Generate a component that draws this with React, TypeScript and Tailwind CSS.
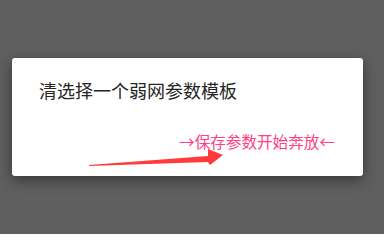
export default function App() {
  return (
    <div className="w-[384px] h-[234px] bg-[#5f5f5f] pt-[58px] pl-[12px] overflow-hidden" style={{ fontFamily: '"Noto Sans CJK SC", "Noto Sans", sans-serif' }}>
      <div className="relative w-[351px] h-[118px] bg-white rounded-[3px] shadow-[0_4px_14px_rgba(0,0,0,0.45)]">
        <div className="pl-[27px] pt-[20px] text-[18px] leading-[24px] text-[#262626]">清选择一个弱网参数模板</div>
        <div className="flex justify-end pr-[28px] pt-[29px] text-[15.6px] leading-[20px] text-[#ff4081]">→保存参数开始奔放←</div>
        {/* annotation arrow */}
        <svg className="absolute left-0 top-0 pointer-events-none" width="351" height="118" viewBox="0 0 351 118">
          <polygon points="77,107 196,98 196,91 211,97 198,107 196,104 77,108" fill="#ff3b3b" />
        </svg>
      </div>
    </div>
  );
}
